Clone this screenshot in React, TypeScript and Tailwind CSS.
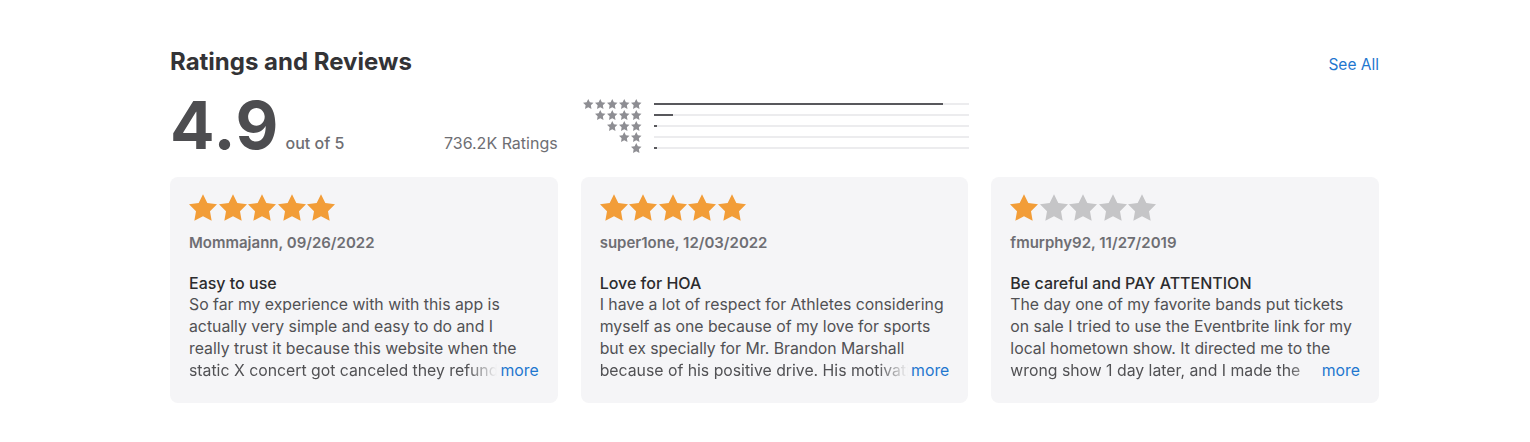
import React from "react";

type Review = {
  stars: number;
  author: string;
  title: string;
  lines: string[];
};

const reviews: Review[] = [
  {
    stars: 5,
    author: "Mommajann, 09/26/2022",
    title: "Easy to use",
    lines: [
      "So far my experience with with this app is",
      "actually very simple and easy to do and I",
      "really trust it because this website when the",
      "static X concert got canceled they refunded my money",
    ],
  },
  {
    stars: 5,
    author: "super1one, 12/03/2022",
    title: "Love for HOA",
    lines: [
      "I have a lot of respect for Athletes considering",
      "myself as one because of my love for sports",
      "but ex specially for Mr. Brandon Marshall",
      "because of his positive drive. His motivation is great",
    ],
  },
  {
    stars: 1,
    author: "fmurphy92, 11/27/2019",
    title: "Be careful and PAY ATTENTION",
    lines: [
      "The day one of my favorite bands put tickets",
      "on sale I tried to use the Eventbrite link for my",
      "local hometown show. It directed me to the",
      "wrong show 1 day later, and I made the",
    ],
  },
];

// share of each star count, 5 -> 1
const histogram = [92, 6, 1, 0, 1];

function Star({ className }: { className: string }) {
  return (
    <svg viewBox="2 2 20 19.1" className={className} fill="currentColor">
      <polygon points="12,2 15.09,8.26 22,9.27 17,14.14 18.18,21.02 12,17.77 5.82,21.02 7,14.14 2,9.27 8.91,8.26" />
    </svg>
  );
}

function ReviewCard({ review }: { review: Review }) {
  return (
    <div className="flex flex-col h-[226px] rounded-lg bg-[#f5f5f7] px-[19px] pt-[17px]">
      <div className="flex gap-[1.5px]">
        {[0, 1, 2, 3, 4].map((i) => (
          <Star
            key={i}
            className={
              "w-[28px] h-[27px] " + (i < review.stars ? "text-[#f29d38]" : "text-[#c5c5c7]")
            }
          />
        ))}
      </div>
      <p className="mt-[12px] text-[15px] leading-[20px] font-semibold text-[#6e6e73]">{review.author}</p>
      <p className="mt-[19px] text-[16px] leading-[22px] font-medium text-[#2c2c2e]">{review.title}</p>
      <div className="text-[15.8px] leading-[22px] text-[#515154]">
        {review.lines.slice(0, 3).map((line) => (
          <p key={line} className="whitespace-nowrap">{line}</p>
        ))}
        <div className="flex">
          <p className="min-w-0 flex-1 overflow-hidden whitespace-nowrap [mask-image:linear-gradient(to_right,black_calc(100%-30px),transparent)]">
            {review.lines[3]}
          </p>
          <span className="ml-[3px] text-[#1f77cf]">more</span>
        </div>
      </div>
    </div>
  );
}

export default function App() {
  return (
    <div className="w-[1530px] h-[442px] bg-white font-['Inter',sans-serif]">
      <div className="ml-[170px] w-[1209px] pt-[48px]">
        <div className="flex items-baseline justify-between">
          <h2 className="text-[24px] leading-[28px] font-bold text-[#333336]">Ratings and Reviews</h2>
          <a className="text-[15.5px] text-[#1f77cf]">See All</a>
        </div>

        <div className="grid grid-cols-3 gap-x-[23px] mt-[16px] h-[85px]">
          <div className="flex items-baseline">
            <span className="text-[66px] leading-[66px] font-bold tracking-[1px] text-[#4d4d50]">4.9</span>
            <span className="ml-[6px] text-[16px] font-medium text-[#6e6e73]">out of 5</span>
            <span className="ml-auto text-[16px] text-[#6e6e73]">736.2K Ratings</span>
          </div>
          <div className="flex flex-col pt-[6px] w-[388px]">
            {histogram.map((pct, row) => (
              <div key={row} className="flex items-center h-[11px]">
                <div className="flex justify-end gap-[1.5px] w-[61px]">
                  {Array.from({ length: 5 - row }).map((_, i) => (
                    <Star key={i} className="w-[10.5px] h-[10px] text-[#8e8e93]" />
                  ))}
                </div>
                <div className="ml-[12px] flex-1 h-[2px] bg-[#ececee]">
                  <div className="h-[2px] bg-[#58585c]" style={{ width: `${pct}%`, minWidth: pct > 0 ? 3 : 0 }} />
                </div>
              </div>
            ))}
          </div>
        </div>

        <div className="grid grid-cols-3 gap-x-[23px]">
          {reviews.map((r) => (
            <ReviewCard key={r.author} review={r} />
          ))}
        </div>
      </div>
    </div>
  );
}
